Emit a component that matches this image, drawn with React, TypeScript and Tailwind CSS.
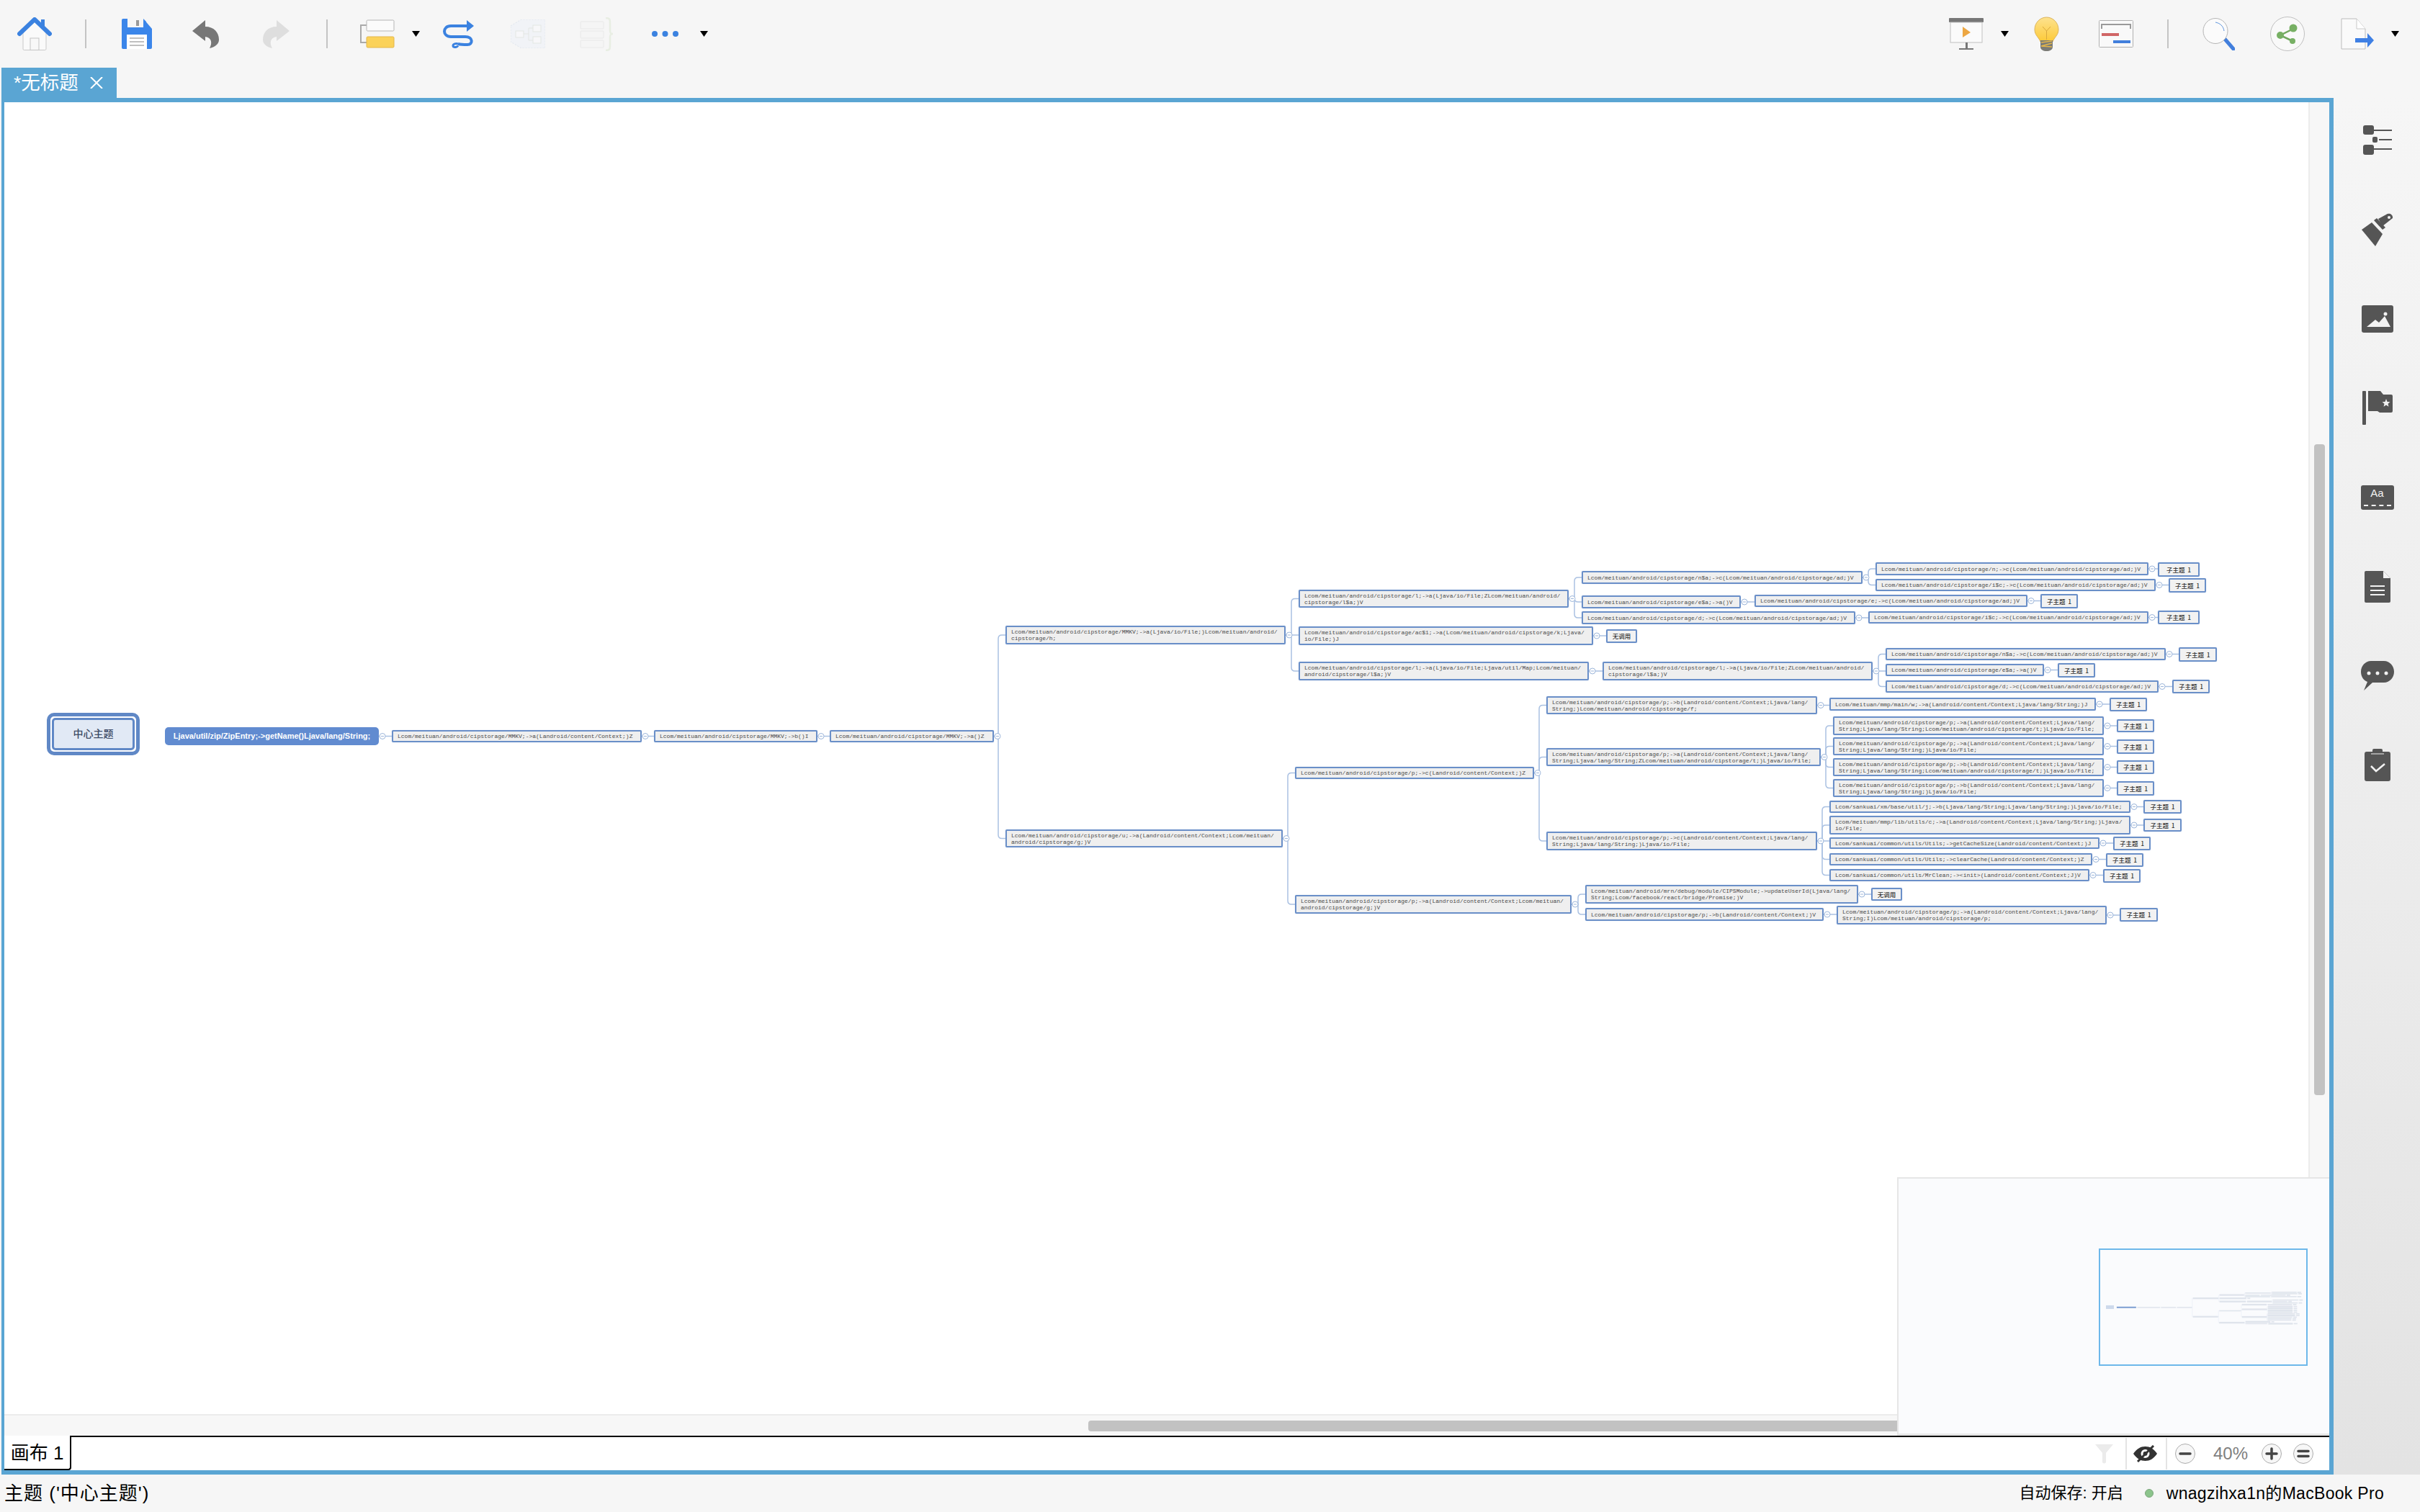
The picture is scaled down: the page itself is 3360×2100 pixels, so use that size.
import React from "react";

const OX = 6;
const OY = 142;

type MapNode = { id: string; parent?: string; x: number; y: number; r: number; b: number; text: string };

const P = "Lcom/meituan/android/cipstorage/";
const AD = "Lcom/meituan/android/cipstorage/ad;)V";

const n = (id: string, parent: string, x: number, y: number, r: number, b: number, text: string): MapNode => ({ id, parent, x, y, r, b, text });
const t = (parent: string, x: number, y: number, r: number, b: number, text = "子主题  1"): MapNode => ({ id: parent + "-t", parent, x, y, r, b, text });

const nodes: MapNode[] = [
  n("n1", "blue", 544, 1014, 891, 1031, P + "MMKV;->a(Landroid/content/Context;)Z"),
  n("n2", "n1", 908, 1014, 1135, 1031, P + "MMKV;->b()I"),
  n("n3", "n2", 1152, 1014, 1380, 1031, P + "MMKV;->a()Z"),
  n("A", "n3", 1396, 869, 1785, 895, P + "MMKV;->a(Ljava/io/File;)Lcom/meituan/android/\ncipstorage/h;"),
  n("B", "n3", 1396, 1152, 1781, 1177, P + "u;->a(Landroid/content/Context;Lcom/meituan/\nandroid/cipstorage/g;)V"),
  n("A1", "A", 1803, 819, 2178, 844, P + "l;->a(Ljava/io/File;ZLcom/meituan/android/\ncipstorage/l$a;)V"),
  n("A2", "A", 1803, 870, 2212, 896, P + "ac$1;->a(Lcom/meituan/android/cipstorage/k;Ljava/\nio/File;)J"),
  n("A3", "A", 1803, 919, 2206, 945, P + "l;->a(Ljava/io/File;Ljava/util/Map;Lcom/meituan/\nandroid/cipstorage/l$a;)V"),
  n("B1", "B", 1798, 1065, 2130, 1082, P + "p;->c(Landroid/content/Context;)Z"),
  n("B2", "B", 1798, 1243, 2182, 1269, P + "p;->a(Landroid/content/Context;Lcom/meituan/\nandroid/cipstorage/g;)V"),
  n("A11", "A1", 2196, 793, 2586, 811, P + "n$a;->c(" + AD),
  n("A111", "A11", 2604, 781, 2983, 799, P + "n;->c(" + AD),
  t("A111", 2996, 781, 3054, 801),
  n("A112", "A11", 2604, 804, 2993, 821, P + "i$c;->c(" + AD),
  t("A112", 3011, 803, 3063, 823),
  n("A12", "A1", 2196, 827, 2417, 845, P + "e$a;->a()V"),
  n("A121", "A12", 2436, 826, 2815, 843, P + "e;->c(" + AD),
  t("A121", 2833, 825, 2885, 845),
  n("A13", "A1", 2196, 849, 2576, 867, P + "d;->c(" + AD),
  n("A131", "A13", 2594, 849, 2983, 866, P + "i$c;->c(" + AD),
  t("A131", 2996, 848, 3054, 867),
  t("A2", 2230, 874, 2273, 893, "无调用"),
  n("A31", "A3", 2225, 919, 2600, 945, P + "l;->a(Ljava/io/File;ZLcom/meituan/android/\ncipstorage/l$a;)V"),
  n("A311", "A31", 2618, 900, 3007, 917, P + "n$a;->c(" + AD),
  t("A311", 3025, 899, 3078, 919),
  n("A312", "A31", 2618, 922, 2838, 939, P + "e$a;->a()V"),
  t("A312", 2857, 921, 2909, 941),
  n("A313", "A31", 2618, 945, 2997, 962, P + "d;->c(" + AD),
  t("A313", 3016, 944, 3068, 963),
  n("B11", "B1", 2147, 967, 2523, 992, P + "p;->b(Landroid/content/Context;Ljava/lang/\nString;)Lcom/meituan/android/cipstorage/f;"),
  n("B111", "B11", 2540, 969, 2910, 987, "Lcom/meituan/mmp/main/w;->a(Landroid/content/Context;Ljava/lang/String;)J"),
  t("B111", 2929, 969, 2981, 988),
  n("B12", "B1", 2147, 1039, 2528, 1064, P + "p;->a(Landroid/content/Context;Ljava/lang/\nString;Ljava/lang/String;ZLcom/meituan/android/cipstorage/t;)Ljava/io/File;"),
  n("B121", "B12", 2545, 995, 2921, 1021, P + "p;->a(Landroid/content/Context;Ljava/lang/\nString;Ljava/lang/String;Lcom/meituan/android/cipstorage/t;)Ljava/io/File;"),
  t("B121", 2939, 999, 2991, 1017),
  n("B122", "B12", 2545, 1024, 2921, 1049, P + "p;->a(Landroid/content/Context;Ljava/lang/\nString;Ljava/lang/String;)Ljava/io/File;"),
  t("B122", 2939, 1027, 2991, 1047),
  n("B123", "B12", 2545, 1053, 2921, 1078, P + "p;->b(Landroid/content/Context;Ljava/lang/\nString;Ljava/lang/String;Lcom/meituan/android/cipstorage/t;)Ljava/io/File;"),
  t("B123", 2939, 1056, 2991, 1075),
  n("B124", "B12", 2545, 1082, 2921, 1107, P + "p;->b(Landroid/content/Context;Ljava/lang/\nString;Ljava/lang/String;)Ljava/io/File;"),
  t("B124", 2939, 1085, 2991, 1105),
  n("B13", "B1", 2147, 1155, 2523, 1181, P + "p;->c(Landroid/content/Context;Ljava/lang/\nString;Ljava/lang/String;)Ljava/io/File;"),
  n("B131", "B13", 2540, 1112, 2958, 1129, "Lcom/sankuai/xm/base/util/j;->b(Ljava/lang/String;Ljava/lang/String;)Ljava/io/File;"),
  t("B131", 2976, 1111, 3029, 1130),
  n("B132", "B13", 2540, 1133, 2958, 1159, "Lcom/meituan/mmp/lib/utils/c;->a(Landroid/content/Context;Ljava/lang/String;)Ljava/\nio/File;"),
  t("B132", 2976, 1137, 3029, 1155),
  n("B133", "B13", 2540, 1163, 2915, 1179, "Lcom/sankuai/common/utils/Utils;->getCacheSize(Landroid/content/Context;)J"),
  t("B133", 2934, 1162, 2986, 1181),
  n("B134", "B13", 2540, 1185, 2905, 1202, "Lcom/sankuai/common/utils/Utils;->clearCache(Landroid/content/Context;)Z"),
  t("B134", 2924, 1185, 2976, 1204),
  n("B135", "B13", 2540, 1207, 2901, 1224, "Lcom/sankuai/common/utils/MrClean;-><init>(Landroid/content/Context;J)V"),
  t("B135", 2920, 1207, 2972, 1226),
  n("B21", "B2", 2201, 1229, 2580, 1255, "Lcom/meituan/android/mrn/debug/module/CIPSModule;->updateUserId(Ljava/lang/\nString;Lcom/facebook/react/bridge/Promise;)V"),
  t("B21", 2598, 1233, 2641, 1251, "无调用"),
  n("B22", "B2", 2201, 1261, 2532, 1279, P + "p;->b(Landroid/content/Context;)V"),
  n("B221", "B22", 2550, 1258, 2925, 1284, P + "p;->a(Landroid/content/Context;Ljava/lang/\nString;I)Lcom/meituan/android/cipstorage/p;"),
  t("B221", 2943, 1261, 2996, 1280),
];

const blue: MapNode = { id: "blue", x: 229, y: 1010, r: 526, b: 1035, text: "Ljava/util/zip/ZipEntry;->getName()Ljava/lang/String;" };
const center = { x: 65, y: 990, r: 194, b: 1049 };
const byId: Record<string, MapNode> = { blue };
nodes.forEach((m) => (byId[m.id] = m));
const parents = Array.from(new Set(nodes.map((m) => m.parent as string))).map((id) => byId[id]);

function linkPath(c: MapNode) {
  const p = byId[c.parent as string];
  const py = (p.y + p.b) / 2 - OY;
  const cy = (c.y + c.b) / 2 - OY;
  const sx = c.x - 10 - OX;
  const px = p.r - OX;
  const ex = c.x - OX;
  const d = cy - py;
  if (Math.abs(d) < 4) return `M${px} ${py} H${ex}`;
  const s = d > 0 ? 1 : -1;
  return `M${px} ${py} H${sx} V${cy - 5 * s} Q${sx} ${cy} ${sx + 5} ${cy} H${ex}`;
}

function MindLinks() {
  return (
    <svg className="absolute left-0 top-0" width="3199" height="1822">
      {nodes.map((c) => (
        <path key={c.id} d={linkPath(c)} fill="none" stroke="#aac1e2" strokeWidth="1.5" />
      ))}
      {parents.map((p) => {
        const cx = p.r - OX + 5;
        const cy = (p.y + p.b) / 2 - OY;
        return (
          <g key={p.id}>
            <circle cx={cx} cy={cy} r="4" fill="#fff" stroke="#9db6da" />
            <path d={`M${cx - 2} ${cy} h4`} stroke="#9db6da" />
          </g>
        );
      })}
    </svg>
  );
}

function NodeBox({ node }: { node: MapNode }) {
  const topic = node.text.includes("主题") || node.text === "无调用";
  return (
    <div
      className={
        topic
          ? "absolute flex items-center justify-center whitespace-pre rounded-[2px] border-2 border-[#6a8fc8] bg-[#f2f2f2] font-['Noto_Sans_CJK_SC',sans-serif] text-[8.5px] font-medium leading-[9px] text-[#333] shadow-[0_0_1px_#aac1e2]"
          : "absolute flex items-center whitespace-pre rounded-[2px] border-2 border-[#6a8fc8] bg-[#efefef] pl-[6px] font-['Liberation_Mono',monospace] text-[8px] leading-[9px] text-[#4a4a4a] shadow-[0_0_1px_#aac1e2]"
      }
      style={{ left: node.x - OX, top: node.y - OY, width: node.r - node.x, height: node.b - node.y }}
    >
      {node.text}
    </div>
  );
}

function MiniMap() {
  const mx = (v: number) => 8 + (v - 65) * 0.0907;
  const my = (v: number) => 58 + (v - 781) * 0.0907;
  return (
    <svg className="absolute left-0 top-0" width="290" height="163">
      <rect x={mx(center.x)} y={my(center.y)} width={11} height={5} fill="#cdd9ec" />
      <rect x={mx(blue.x)} y={my(blue.y)} width={27} height={2} fill="#7d9ed2" />
      {nodes.map((c) => {
        const p = byId[c.parent as string];
        return (
          <path
            key={c.id}
            d={`M${mx(p.r)} ${my((p.y + p.b) / 2)} H${mx(c.x - 10)} V${my((c.y + c.b) / 2)} H${mx(c.x)}`}
            fill="none"
            stroke="#e8edf5"
            strokeWidth="0.6"
          />
        );
      })}
      {nodes.map((c) => (
        <rect key={c.id} x={mx(c.x)} y={my(c.y)} width={(c.r - c.x) * 0.0907} height={(c.b - c.y) * 0.0907} fill="#dfe4ec" />
      ))}
    </svg>
  );
}

const BLUE = "#3b82e0";

function Caret({ className }: { className: string }) {
  return (
    <svg className={className} width="11" height="8" viewBox="0 0 11 8">
      <path d="M0 0h11L5.5 8z" fill="#000" />
    </svg>
  );
}

function Sep({ className }: { className: string }) {
  return <div className={`h-[40px] w-[2px] bg-[#c4c4c4] ${className}`} />;
}

function HomeIcon() {
  return (
    <svg className="ml-[24px]" width="48" height="46" viewBox="0 0 48 46">
      <path d="M8 21 24 6l16 15v23a1.500 1.500 0 0 1-1.500 1.500h-29A1.500 1.500 0 0 1 8 44z" fill="#fafafa" stroke="#c9c9c9" />
      <rect x="18" y="29" width="12" height="16.500" fill="#f8f8f8" stroke="#c4c4c4" />
      <path d="M3 23 24 3l21 20" fill="none" stroke={BLUE} strokeWidth="6" strokeLinecap="round" strokeLinejoin="round" />
      <path d="M33 11V3h5v13z" fill={BLUE} />
    </svg>
  );
}

function SaveIcon() {
  return (
    <svg className="ml-[49px]" width="42" height="42" viewBox="0 0 42 42">
      <path d="M2 0h28l12 14v26a2 2 0 0 1-2 2H2a2 2 0 0 1-2-2V2a2 2 0 0 1 2-2z" fill="#3b86ea" />
      <rect x="8" y="0" width="26" height="12" fill="#f6f6f6" />
      <path d="M34 4v8h-4V0z" fill="#3b86ea" />
      <rect x="20" y="2" width="4" height="8" fill="#999" />
      <rect x="7" y="22" width="28" height="20" fill="#fff" />
      <path d="M11 27h20M11 32h20M11 37h20" stroke="#aaa" strokeWidth="1.5" />
    </svg>
  );
}

function UndoIcon({ className, color, flip }: { className: string; color: string; flip?: boolean }) {
  return (
    <svg className={className} width="38" height="39" viewBox="0 0 38 39">
      <path
        transform={flip ? "translate(38 0) scale(-1 1)" : undefined}
        d="M0 15 18 0v9c12 0 19 8 19 18 0 6-5 10-13 12 4-7 3-15-6-16v6z"
        fill={color}
      />
    </svg>
  );
}

function TopicIcon() {
  return (
    <svg className="ml-[45px]" width="48" height="40" viewBox="0 0 48 40">
      <path d="M9 8H1v24h9" fill="none" stroke="#aaa" strokeWidth="2" />
      <rect x="9" y="1" width="38" height="15" rx="1.5" fill="#fbfbfb" stroke="#b5b5b5" />
      <rect x="9" y="24" width="38" height="15" rx="1.5" fill="#fbd25a" stroke="#e3b64a" />
    </svg>
  );
}

function RelationIcon() {
  return (
    <svg className="ml-[31px]" width="44" height="40" viewBox="0 0 44 40">
      <path d="M36 9H12C0 9 0 24 12 24h20c11 0 11 11 3 11-5 0-9 0-13-1" fill="none" stroke={BLUE} strokeWidth="4" />
      <path d="M34 1 44 9 34 17z" fill={BLUE} />
      <path d="M22 34c-3-1-7 0-7 2.500s5 3 7 0" fill="none" stroke={BLUE} strokeWidth="3" />
    </svg>
  );
}

function BoundaryIcon() {
  return (
    <svg className="ml-[51px] opacity-60" width="48" height="40" viewBox="0 0 48 40">
      <path d="M0 9 15 0h33v40H15L0 31z" fill="#eef2f8" stroke="#cfdae8" strokeDasharray="2 2" />
      <g fill="#f8f9fb" stroke="#d8ddd8">
        <rect x="7" y="16" width="11" height="9" />
        <rect x="31" y="8" width="11" height="9" />
        <rect x="31" y="24" width="11" height="9" />
      </g>
      <path d="M18 20h7M25 12v17h6M25 12h6" fill="none" stroke="#d8ddd8" />
    </svg>
  );
}

function SummaryIcon() {
  return (
    <svg className="ml-[48px] opacity-70" width="48" height="47" viewBox="0 0 48 47">
      <g fill="#f5f5f5" stroke="#e4e4e4">
        <rect x="1" y="6" width="32" height="10" rx="1" />
        <rect x="1" y="19" width="32" height="10" rx="1" />
        <rect x="1" y="32" width="32" height="10" rx="1" />
      </g>
      <path d="M36 1c6 0 6 2 6 8v9c0 4 1 5 4 5-3 0-4 1-4 5v10c0 6 0 8-6 8" fill="none" stroke="#e3ebdc" strokeWidth="2.500" />
    </svg>
  );
}

function DotsIcon() {
  return (
    <svg className="ml-[52px]" width="37" height="8" viewBox="0 0 37 8">
      <circle cx="4" cy="4" r="4" fill={BLUE} />
      <circle cx="18.500" cy="4" r="4" fill={BLUE} />
      <circle cx="33" cy="4" r="4" fill={BLUE} />
    </svg>
  );
}

function PresentIcon() {
  return (
    <svg width="48" height="44" viewBox="0 0 48 44">
      <rect x="0" y="0" width="48" height="6" rx="1" fill="#777" />
      <rect x="2" y="6" width="44" height="28" fill="#fbfbfb" stroke="#c0c0c0" />
      <path d="M19 12 30 20 19 27z" fill="#eda743" />
      <rect x="23" y="34" width="3" height="8" fill="#777" />
      <rect x="14" y="42" width="20" height="2" fill="#777" />
    </svg>
  );
}

function BulbIcon() {
  return (
    <svg className="ml-[35px]" width="35" height="48" viewBox="0 0 35 48">
      <defs>
        <linearGradient id="bulb" x1="0" y1="0" x2="0" y2="1">
          <stop offset="0" stopColor="#fde28f" />
          <stop offset="1" stopColor="#fdca38" />
        </linearGradient>
      </defs>
      <path d="M17.500 1C8 1 1 9 1 18c0 8 6 11 8 17h17c2-6 8-9 8-17C34 9 27 1 17.500 1z" fill="url(#bulb)" stroke="#dcb45a" />
      <path d="M17.500 32V20L12 14M17.500 20 23 14" fill="none" stroke="#d9a93e" />
      <path d="M9 33h17v9c0 4-4 6-8.500 6S9 46 9 42z" fill="#7b7b76" />
      <path d="M10 36 25 34M10 41 25 37M10 41 25 42" fill="none" stroke="#e3b64a" strokeWidth="1.5" />
    </svg>
  );
}

function GanttIcon() {
  return (
    <svg className="ml-[55px]" width="48" height="38" viewBox="0 0 48 38">
      <rect x="0.500" y="0.500" width="47" height="37" rx="1" fill="#f9f9f9" stroke="#b0b0b0" />
      <path d="M4 12V6h40v6" fill="none" stroke="#9a9a9a" strokeWidth="2" />
      <rect x="4" y="18" width="24" height="4" fill="#d06666" />
      <rect x="20" y="28" width="24" height="4" fill="#427fdc" />
    </svg>
  );
}

function SearchIcon() {
  return (
    <svg className="ml-[47px]" width="45" height="45" viewBox="0 0 45 45">
      <path d="M30 28 43 43" stroke="#427fdc" strokeWidth="5" strokeLinecap="round" />
      <ellipse cx="18" cy="18" rx="17" ry="17.500" fill="#fbfbfb" stroke="#b5b5b5" />
      <path d="M18 6c6 1 11 5 12 12" fill="none" stroke="#5b93dd" />
    </svg>
  );
}

function ShareIcon() {
  return (
    <svg className="ml-[49px]" width="48" height="48" viewBox="0 0 48 48">
      <circle cx="24" cy="24" r="23.500" fill="#f9f9f9" stroke="#c0c0c0" />
      <path d="M32 17 14 26 31 34" fill="none" stroke="#72a85f" strokeWidth="2.500" />
      <circle cx="32" cy="16" r="5.500" fill="#77b064" />
      <circle cx="14" cy="26" r="5" fill="#77b064" />
      <circle cx="31" cy="34" r="4" fill="#77b064" />
    </svg>
  );
}

function ExportIcon() {
  return (
    <svg className="ml-[50px]" width="46" height="44" viewBox="0 0 46 44">
      <path d="M1 1h21l12 14v28H1z" fill="#fafafa" stroke="#bdbdbd" />
      <path d="M22 1v14h12" fill="#fff" stroke="#c8c8c8" />
      <path d="M20 28h17v-7l9 10-9 10v-7H20z" fill="#3f80e4" />
    </svg>
  );
}

const sideIcons = [
  <svg key="list" width="40" height="41" viewBox="0 0 40 41" fill="#555">
    <rect x="0" y="0" width="15" height="13" rx="3" />
    <rect x="0" y="27" width="15" height="14" rx="3" />
    <rect x="13" y="16" width="7" height="8" rx="2" />
    <path d="M15 6h25v2H15zM22 19h18v2H22zM15 32h25v2H15z" />
  </svg>,
  <svg key="brush" width="44" height="46" viewBox="0 0 44 46" fill="#555">
    <path d="M0 23 14 13l15 16-10 17z" />
    <path d="M17 10l4-3 12 13-4 3z" />
    <path d="M23 8 34 2c4-3 10 0 9 5l-14 11z" />
    <circle cx="38" cy="6" r="2" fill="#f2f2f2" />
  </svg>,
  <svg key="image" width="44" height="38" viewBox="0 0 44 38">
    <rect width="44" height="38" rx="3" fill="#555" />
    <path d="M7 30 19 20l5 4 8-9 8 15z" fill="#f2f2f2" />
    <circle cx="33" cy="12" r="2.500" fill="#f2f2f2" />
  </svg>,
  <svg key="flag" width="42" height="47" viewBox="0 0 42 47">
    <rect x="0" y="0" width="5" height="47" rx="1" fill="#555" />
    <path d="M8 0h17l4 5h11a2 2 0 0 1 2 2v21a2 2 0 0 1-2 2H24l-3-2H8z" fill="#555" />
    <path d="m33 11 1.500 4 4 .2-3 2.600 1 4-3.500-2.200-3.500 2.200 1-4-3-2.600 4-.2z" fill="#f2f2f2" />
  </svg>,
  <div key="aa" className="relative flex h-[34px] w-[46px] items-start justify-center rounded-[3px] bg-[#555] font-['Liberation_Sans',sans-serif] text-[15px] leading-[22px] text-[#f2f2f2]">
    Aa
    <div className="absolute bottom-[5px] left-[4px] right-[4px] border-b-2 border-dashed border-[#f2f2f2]" />
  </div>,
  <svg key="doc" width="36" height="44" viewBox="0 0 36 44" fill="#555">
    <path d="M2 0h24l10 10v32a2 2 0 0 1-2 2H2a2 2 0 0 1-2-2V2a2 2 0 0 1 2-2z" />
    <path d="M8 20h20v2H8zM8 26h20v2H8zM8 32h20v2H8z" fill="#f2f2f2" />
    <path d="M26 0v10h10z" fill="#f2f2f2" />
  </svg>,
  <svg key="chat" width="46" height="41" viewBox="0 0 46 41">
    <path d="M14 0h18c8 0 14 7 14 15s-6 15-14 15H16L4 41l5-12C3 27 0 21 0 15 0 7 6 0 14 0z" fill="#555" />
    <circle cx="11" cy="17" r="2.500" fill="#f2f2f2" />
    <circle cx="23" cy="17" r="2.500" fill="#f2f2f2" />
    <circle cx="35" cy="17" r="2.500" fill="#f2f2f2" />
  </svg>,
  <svg key="check" width="36" height="45" viewBox="0 0 36 45">
    <path d="M3 4h8V2a2 2 0 0 1 2-2h10a2 2 0 0 1 2 2v2h8a3 3 0 0 1 3 3v35a3 3 0 0 1-3 3H3a3 3 0 0 1-3-3V7a3 3 0 0 1 3-3z" fill="#555" />
    <path d="M9 7h18" stroke="#f2f2f2" strokeWidth="1" />
    <path d="M9 24 16 31 28 21" fill="none" stroke="#f2f2f2" strokeWidth="2.500" />
  </svg>,
];

function ZoomButton({ className, sign }: { className: string; sign: string }) {
  return (
    <svg className={className} width="28" height="28" viewBox="0 0 28 28">
      <circle cx="14" cy="14" r="13.500" fill="#f7f7f7" stroke="#adadad" />
      <path d={sign} stroke="#444" strokeWidth="3.500" strokeLinecap="round" />
    </svg>
  );
}

export default function App() {
  return (
    <div className="flex h-[2100px] w-[3360px] flex-col overflow-hidden bg-[#f6f6f6] font-['Liberation_Sans','Noto_Sans_CJK_SC',sans-serif] text-black">
      {/* toolbar */}
      <div className="flex h-[94px] items-center">
        <HomeIcon />
        <Sep className="ml-[46px]" />
        <SaveIcon />
        <UndoIcon className="ml-[56px]" color="#777" />
        <UndoIcon className="ml-[59px]" color="#dedede" flip />
        <Sep className="ml-[51px]" />
        <TopicIcon />
        <Caret className="ml-[24px]" />
        <RelationIcon />
        <BoundaryIcon />
        <SummaryIcon />
        <DotsIcon />
        <Caret className="ml-[30px]" />
        <div className="ml-[1723px]">
          <PresentIcon />
        </div>
        <Caret className="ml-[24px]" />
        <BulbIcon />
        <GanttIcon />
        <Sep className="ml-[47px]" />
        <SearchIcon />
        <ShareIcon />
        <ExportIcon />
        <Caret className="ml-[24px]" />
      </div>

      {/* tab strip */}
      <div className="flex h-[42px] items-end pl-[2px]">
        <div className="flex h-[42px] w-[160px] items-center bg-[#5aa5d3] pl-[17px] text-[26.500px] leading-none text-white">
          <span>*无标题</span>
          <svg className="ml-[16px]" width="18" height="16" viewBox="0 0 18 16">
            <path d="M1 0 17 16M17 0 1 16" stroke="#fff" strokeWidth="2" />
          </svg>
        </div>
      </div>

      {/* window + side rail */}
      <div className="flex h-[1912px] pl-[2px]">
        <div className="relative flex w-[3238px] flex-col border-[6px] border-l-[4px] border-[#5aa5d3] bg-white">
          <div className="flex h-[1822px]">
            <div className="relative flex-1 overflow-hidden bg-white">
              <MindLinks />
              <div
                className="absolute flex items-center justify-center rounded-[10px] border-[5px] border-[#6088c6] bg-white p-[2px]"
                style={{ left: center.x - OX, top: center.y - OY, width: center.r - center.x, height: center.b - center.y }}
              >
                <div className="flex h-full w-full items-center justify-center rounded-[5px] border-[3px] border-[#6088c6] bg-[#e1e9f5] text-[14px] font-medium text-[#3d4a66]">
                  中心主题
                </div>
              </div>
              <div
                className="absolute flex items-center justify-center rounded-[5px] bg-[#618bd0] text-[11px] font-bold text-white"
                style={{ left: blue.x - OX, top: blue.y - OY, width: blue.r - blue.x, height: blue.b - blue.y }}
              >
                {blue.text}
              </div>
              {nodes.map((m) => (
                <NodeBox key={m.id} node={m} />
              ))}
            </div>
            <div className="flex w-[29px] items-start justify-center border-l-2 border-[#ececec] bg-[#f7f7f7] pt-[475px]">
              <div className="h-[904px] w-[15px] rounded-[4px] bg-[#c2c2c2]" />
            </div>
          </div>
          <div className="flex h-[30px] items-center border-t-2 border-[#ececec] bg-[#f7f7f7] pl-[1505px]">
            <div className="h-[15px] w-[1300px] rounded-[4px] bg-[#c2c2c2]" />
          </div>

          {/* bottom bar */}
          <div className="flex h-[48px] items-stretch bg-white">
            <div className="flex w-[93px] items-center justify-center whitespace-pre rounded-br-[4px] border-b-2 border-r-2 border-black pt-[1px] text-[26px] leading-none">
              画布 1
            </div>
            <div className="flex flex-1 items-center border-t-2 border-black">
              <svg className="ml-[2809px]" width="27" height="28" viewBox="0 0 27 28">
                <path d="M1 1h25L16 13v12a2 2 0 0 1-5 0V13z" fill="#ebebeb" />
              </svg>
              <div className="ml-[16px] h-[44px] w-[2px] bg-[#e4e4e4]" />
              <svg className="ml-[9px]" width="33" height="24" viewBox="0 0 33 24">
                <path d="M0 12C5 5 10 2 16.500 2S28 5 33 12c-5 7-10 10-16.500 10S5 19 0 12z" fill="#333" />
                <circle cx="16.500" cy="12" r="6" fill="#fff" />
                <circle cx="16.500" cy="12" r="3" fill="#333" />
                <path d="M6 23 28 1" stroke="#333" strokeWidth="3" />
              </svg>
              <div className="ml-[12px] h-[44px] w-[2px] bg-[#e4e4e4]" />
              <ZoomButton className="ml-[11px]" sign="M7 14h14" />
              <span className="ml-[25px] w-[47px] whitespace-nowrap text-[24px] leading-none text-[#808080]">40%</span>
              <ZoomButton className="ml-[20px]" sign="M7 14h14M14 7v14" />
              <ZoomButton className="ml-[16px]" sign="M7 10.500h14M7 17.500h14" />
            </div>
          </div>

          {/* overview panel */}
          <div className="absolute bottom-[48px] right-0 h-[359px] w-[600px] border-[2px] border-b-[3px] border-r-0 border-[#e6e6e6] bg-[#fafbfd]">
            <div className="absolute left-[278px] top-[97px] h-[163px] w-[290px] border-2 border-[#6db8ea]">
              <MiniMap />
            </div>
          </div>
        </div>

        {/* side rail */}
        <div className="flex w-[120px] flex-col items-center bg-gradient-to-b from-[#f6f6f6] to-[#e3e3e3] pl-[1px]">
          {sideIcons.map((icon, i) => (
            <div key={i} className={i === 0 ? "mt-[38px] flex h-[41px] items-center" : "mt-[83px] flex h-[41px] items-center"}>
              {icon}
            </div>
          ))}
        </div>
      </div>

      {/* status bar */}
      <div className="flex h-[52px] items-center">
        <span className="ml-[6px] text-[26px] leading-none tracking-[1px]">主题 ('中心主题')</span>
        <span className="ml-auto text-[22px] leading-none">自动保存: 开启</span>
        <div className="ml-[30px] h-[12px] w-[12px] rounded-full border border-[#7da77d] bg-[#8cc48c]" />
        <span className="ml-[18px] mr-[50px] text-[23px] leading-none tracking-[0.3px]">wnagzihxa1n的MacBook Pro</span>
      </div>
    </div>
  );
}
